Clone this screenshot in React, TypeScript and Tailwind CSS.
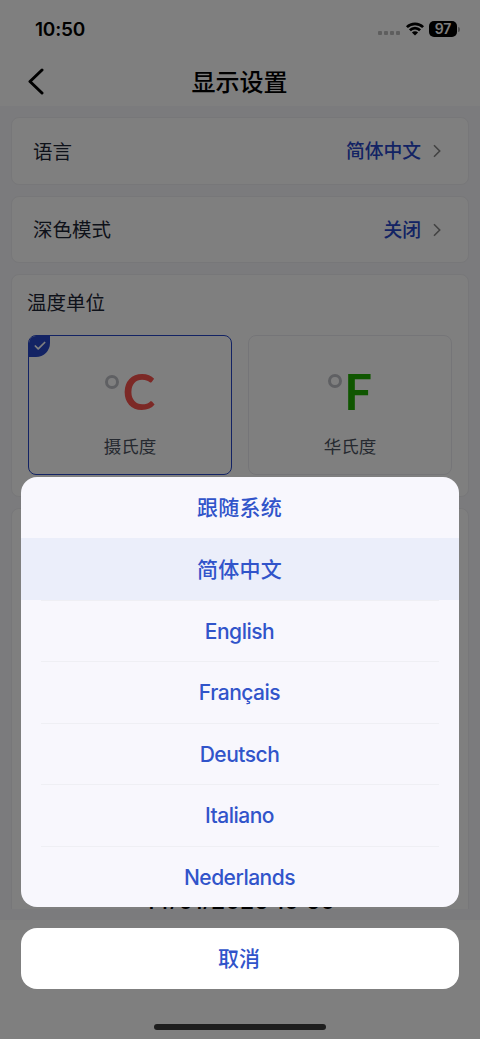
import { Check } from "lucide-react";

const languages = ["跟随系统", "简体中文", "English", "Français", "Deutsch", "Italiano", "Nederlands"];
const selected = "简体中文";

const StatusBar = () => (
  <div className="flex h-14 items-center pl-[35px] pr-[20px] pt-[2px]">
    <span className="text-[19px] font-semibold leading-none tracking-[-0.2px]">10:50</span>
    <div className="ml-auto flex items-center">
      <div className="mr-[5px] mt-2 flex gap-[2px]">
        {[0, 1, 2, 3].map((i) => (
          <span key={i} className="size-1 rounded-[1px] bg-[#bdbdbd]" />
        ))}
      </div>
      <svg width="20" height="14" viewBox="0 0 20 14" fill="none" stroke="#000" strokeWidth="2.7">
        <path d="M1.9 5.1a11.6 11.6 0 0 1 16.2 0" />
        <path d="M4.9 8.3a7.2 7.2 0 0 1 10.2 0" />
        <path d="M10 13.6 6.9 10.6a4.4 4.4 0 0 1 6.2 0Z" fill="#000" stroke="none" />
      </svg>
      <span className="ml-[4px] flex h-4 w-7 items-center justify-center rounded-[5px] bg-black text-[14px] font-semibold leading-none text-white">
        97
      </span>
      <span className="ml-[1px] h-[5px] w-[2px] rounded-r-full bg-[#a0a0a0]" />
    </div>
  </div>
);

const Header = () => (
  <div className="relative flex h-[50px] items-center justify-center">
    <svg className="absolute left-7 top-3" width="16" height="27" viewBox="0 0 16 27" fill="none" stroke="#000" strokeWidth="3" strokeLinecap="round" strokeLinejoin="round">
      <path d="M14 2 2 13.5 14 25" />
    </svg>
    <h1 className="pr-px pt-[3px] text-2xl font-medium">显示设置</h1>
  </div>
);

const SettingRow = ({ label, value }: { label: string; value: string }) => (
  <div className="flex h-[67.5px] shrink-0 items-center rounded-lg border border-[#efeff2] bg-white pl-[21px] pr-[27px]">
    <span className="pt-[3px] text-[19.5px] text-[#1d2534]">{label}</span>
    <span className="ml-auto pt-[3px] text-[18.8px] font-medium text-[#2647c8]">{value}</span>
    <svg className="ml-[12px] mt-px" width="8" height="14" viewBox="0 0 8 14" fill="none" stroke="#858585" strokeWidth="1.6">
      <path d="M1 1.2 6.7 7 1 12.8" />
    </svg>
  </div>
);

type UnitProps = { letter: string; name: string; color: string; active?: boolean };

const UnitCard = ({ letter, name, color, active }: UnitProps) => (
  <div
    className={`relative flex h-[140px] flex-1 flex-col items-center overflow-hidden rounded-lg border pt-[29px] ${
      active ? "border-[#2647c8]" : "border-[#ebebf0]"
    }`}
  >
    {active && (
      <span className="absolute -left-px -top-px flex h-[22px] w-[22px] items-center justify-center rounded-br-[14px] bg-[#2647c8]">
        <Check className="ml-px text-white" size={14} strokeWidth={3} />
      </span>
    )}
    <div className="flex h-[52px] items-start gap-[4px]">
      <span
        className={`size-[14px] rounded-full border-[3.5px] border-[#bfc0c6] ${active ? "mt-[10px]" : "-mr-[2px] mt-[9px]"}`}
      />
      <span className={`font-[Lato] text-[49px] font-bold leading-[52px] ${color}`}>{letter}</span>
    </div>
    <span className="mt-[16px] text-[17.5px] leading-[28px] text-[#4b5260]">{name}</span>
  </div>
);

const LanguageSheet = () => (
  <div className="absolute inset-x-[21px] top-[476.5px]">
    <ul className="h-[430px] overflow-hidden rounded-2xl bg-[#f8f7fd] text-[#3154ca]">
      {languages.map((lang, i) => (
        <li
          key={lang}
          className={`relative flex h-[61.5px] items-center justify-center text-[21px] leading-[30px] ${
            i < 2 ? "pt-[2px] pr-px font-medium tracking-[0.2px]" : "pt-[2.5px] pr-px font-[450] tracking-[-0.5px]"
          } ${lang === selected ? "bg-[#ebeefa]" : ""}`}
        >
          {lang}
          {i < languages.length - 1 && <span className="absolute inset-x-5 -bottom-px h-px bg-[#efeff4]" />}
        </li>
      ))}
    </ul>
    <button className="mt-[21px] flex h-[61.5px] w-full items-center justify-center rounded-2xl bg-white pr-[2px] text-[21px] font-medium text-[#3154ca]">
      取消
    </button>
  </div>
);

export default function App() {
  return (
    <div className="relative h-[1039px] w-[480px] overflow-hidden bg-white font-[Inter,'Noto_Sans_CJK_SC',sans-serif] text-black">
      <StatusBar />
      <Header />
      <main className="h-[814px] bg-[#f6f6fa] pb-[11px]">
        <div className="flex h-full flex-col gap-[11px] overflow-hidden px-[11px] pt-[11px]">
          <SettingRow label="语言" value="简体中文" />
          <SettingRow label="深色模式" value="关闭" />
          <section className="h-[222.5px] shrink-0 rounded-lg border border-[#efeff2] bg-white px-4 pt-3">
            <h2 className="-ml-px pt-px text-[19.5px] leading-[30px] text-[#1d2534]">温度单位</h2>
            <div className="mt-[17px] flex gap-4">
              <UnitCard letter="C" name="摄氏度" color="text-[#f9524d]" active />
              <UnitCard letter="F" name="华氏度" color="text-[#1fad00]" />
            </div>
          </section>
          <section className="flex h-[440px] shrink-0 justify-center rounded-lg border border-[#efeff2] bg-white pt-[381px]">
            <span className="text-[23px] font-medium leading-[23px]">14/01/2025 10:50</span>
          </section>
        </div>
      </main>
      <div className="absolute inset-0 bg-black/50" />
      <LanguageSheet />
      <div className="absolute bottom-[9px] left-1/2 h-[6px] w-[172px] -translate-x-1/2 rounded-full bg-[#1e1e1e]" />
    </div>
  );
}
